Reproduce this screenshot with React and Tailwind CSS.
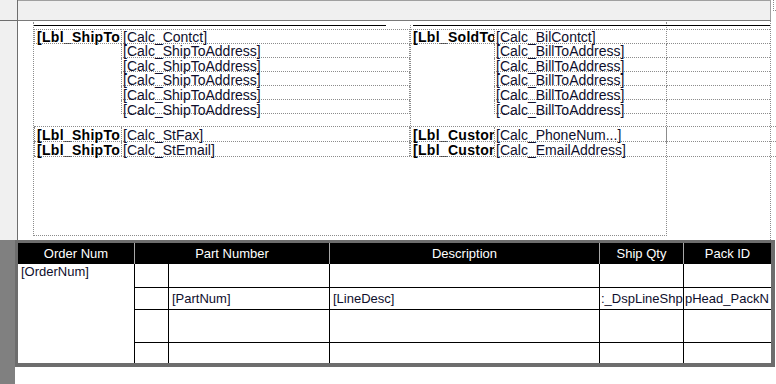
const dot = "border-dotted border-[#8c8c8c]";
const calc = "text-[14px] leading-[13px] text-[#0e0e2c] pl-[1px] whitespace-nowrap overflow-x-clip";
const lbl = "text-[14px] leading-[13px] font-bold tracking-[0.3px] text-black pl-[2px] whitespace-nowrap overflow-x-clip";
const drift = ["pt-[1px]", "pt-[2px]", "pt-[2px]", "pt-[3px]", "pt-[4px]"];

function LeftRow({ first, label, value, pad = "pt-[1px]" }) {
  return (
    <div className={`flex ${first ? "h-[15px]" : "h-[14px]"}`}>
      {label ? (
        <div className={`w-[87px] border-l border-b border-t ${dot} ${lbl} pt-[1px]`}>{label}</div>
      ) : (
        <div className="w-[87px]" />
      )}
      <div className={`w-[289px] border-l border-r border-b ${first ? "border-t" : ""} ${dot} ${calc} ${pad}`}>
        {value}
      </div>
    </div>
  );
}

function RightRow({ first, label, value, pad = "pt-[1px]" }) {
  return (
    <div className={`flex ${first ? "h-[15px]" : "h-[14px]"}`}>
      {label ? (
        <div className={`w-[83px] border-b border-t ${dot} ${lbl} pt-[1px]`}>{label}</div>
      ) : (
        <div className="w-[83px]" />
      )}
      <div className={`w-[173px] border-l border-r border-b ${first ? "border-t" : ""} ${dot} ${calc} ${pad}`}>
        {value}
      </div>
      <div className={`w-[103px] border-b ${first ? "border-t" : ""} ${dot}`} />
    </div>
  );
}

function ContactRow({ first, shipLabel, shipValue, custLabel, custValue }) {
  return (
    <div className={`flex ${first ? "h-[16px] border-t" : "h-[15px]"} border-b ${dot}`}>
      <div className={`w-[87px] border-l ${dot} ${lbl} pt-[2px]`}>{shipLabel}</div>
      <div className={`w-[289px] border-l border-r ${dot} ${calc} pt-[2px]`}>{shipValue}</div>
      <div className={`w-[84px] border-l ${dot} ${lbl} pt-[2px]`}>{custLabel}</div>
      <div className={`w-[173px] border-l border-r ${dot} ${calc} pt-[2px]`}>{custValue}</div>
      <div className="w-[103px]" />
    </div>
  );
}

const cols = [
  { w: "w-[34px]" },
  { w: "w-[161px]", text: "[PartNum]", pad: "pl-[3px]" },
  { w: "w-[270px]", text: "[LineDesc]", pad: "pl-[3px]" },
  { w: "w-[84px]", text: ":_DspLineShp", pad: "pl-[1px]" },
  { w: "w-[88px]", text: "pHead_PackN", pad: "pl-[1px]" },
];

function LineRow({ h, top, filled }) {
  return (
    <div className={`flex ${h} ${top ? "border-t border-black" : ""}`}>
      {cols.map((c, i) => (
        <div
          key={i}
          className={`${c.w} border-l border-black flex items-center overflow-x-clip whitespace-nowrap text-[13px] text-[#0e0e2c] ${c.pad || ""}`}
        >
          {filled ? c.text : null}
        </div>
      ))}
    </div>
  );
}

export default function App() {
  return (
    <div className="w-[776px] h-[384px] overflow-hidden bg-white font-['Liberation_Sans',Arial,sans-serif] flex flex-col">
      {/* ruler strip */}
      <div className="flex h-[21px] shrink-0">
        <div className="w-[18px] bg-[#f0f0f0] border-r border-b border-[#6e6e6e]" />
        <div className="w-[753px] bg-[#f0f0f0] border-t border-r border-[#a0a0a0] border-b-[#7a7a7a] border-b" />
        <div className="flex-1">
          <div className={`ml-[2px] w-[3px] h-[11px] border-l border-b ${dot}`} />
        </div>
      </div>

      {/* page header section */}
      <div className="flex h-[219px] shrink-0">
        <div className="w-[18px] bg-[#f0f0f0] border-r border-[#6e6e6e]" />
        <div className="relative flex-1 pt-[4px] pl-[16px]">
          <div className={`absolute left-[15px] top-[1px] w-[634px] h-[214px] border-l border-r border-b ${dot}`} />
          <div className={`absolute left-[752px] top-0 bottom-0 border-l ${dot}`} />

          <div className="relative flex">
            {/* ship to */}
            <div className="w-[376px]">
              <div className="h-px w-[352px] bg-black" />
              <div className="mt-[3px]">
                <LeftRow first label="[Lbl_ShipTo" value="[Calc_Contct]" />
                {drift.map((p, i) => (
                  <LeftRow key={i} pad={p} value="[Calc_ShipToAddress]" />
                ))}
              </div>
            </div>
            {/* sold to */}
            <div className={`w-[361px] border-l ${dot} pb-[12px]`}>
              <div className="ml-[2px] h-px w-[357px] bg-black" />
              <div className="mt-[3px]">
                <RightRow first label="[Lbl_SoldTo" value="[Calc_BilContct]" />
                {drift.map((p, i) => (
                  <RightRow key={i} pad={p} value="[Calc_BillToAddress]" />
                ))}
              </div>
            </div>
          </div>

          <div className="relative">
            <ContactRow first shipLabel="[Lbl_ShipTo" shipValue="[Calc_StFax]" custLabel="[Lbl_Custom" custValue="[Calc_PhoneNum...]" />
            <ContactRow shipLabel="[Lbl_ShipTo" shipValue="[Calc_StEmail]" custLabel="[Lbl_Custom" custValue="[Calc_EmailAddress]" />
          </div>
        </div>
      </div>

      {/* detail section */}
      <div className="flex flex-1">
        <div className="w-[15px] bg-[#808080]" />
        <div>
          <div className="w-[760px] h-[127px] border-t-[3px] border-l-[3px] border-r-[4px] border-b-[4px] border-[#6d6d6d] flex flex-col">
            <div className="flex h-[21px] bg-black text-white text-[13px]">
              <div className="w-[116px] flex items-center justify-center">Order Num</div>
              <div className="w-[195px] border-l border-[#a8a8a8] flex items-center justify-center">Part Number</div>
              <div className="w-[270px] border-l border-[#a8a8a8] flex items-center justify-center">Description</div>
              <div className="w-[84px] border-l border-[#a8a8a8] flex items-center justify-center">Ship Qty</div>
              <div className="w-[88px] border-l border-[#a8a8a8] flex items-center justify-center">Pack ID</div>
            </div>
            <div className="flex h-[99px]">
              <div className="w-[116px] pl-[3px] text-[13px] leading-[16px] text-[#0e0e2c]">[OrderNum]</div>
              <div className="w-[637px] flex flex-col">
                <LineRow h="h-[23px]" />
                <LineRow h="h-[22px]" top filled />
                <LineRow h="h-[33px]" top />
                <LineRow h="h-[21px]" top />
              </div>
            </div>
          </div>
        </div>
      </div>
    </div>
  );
}
